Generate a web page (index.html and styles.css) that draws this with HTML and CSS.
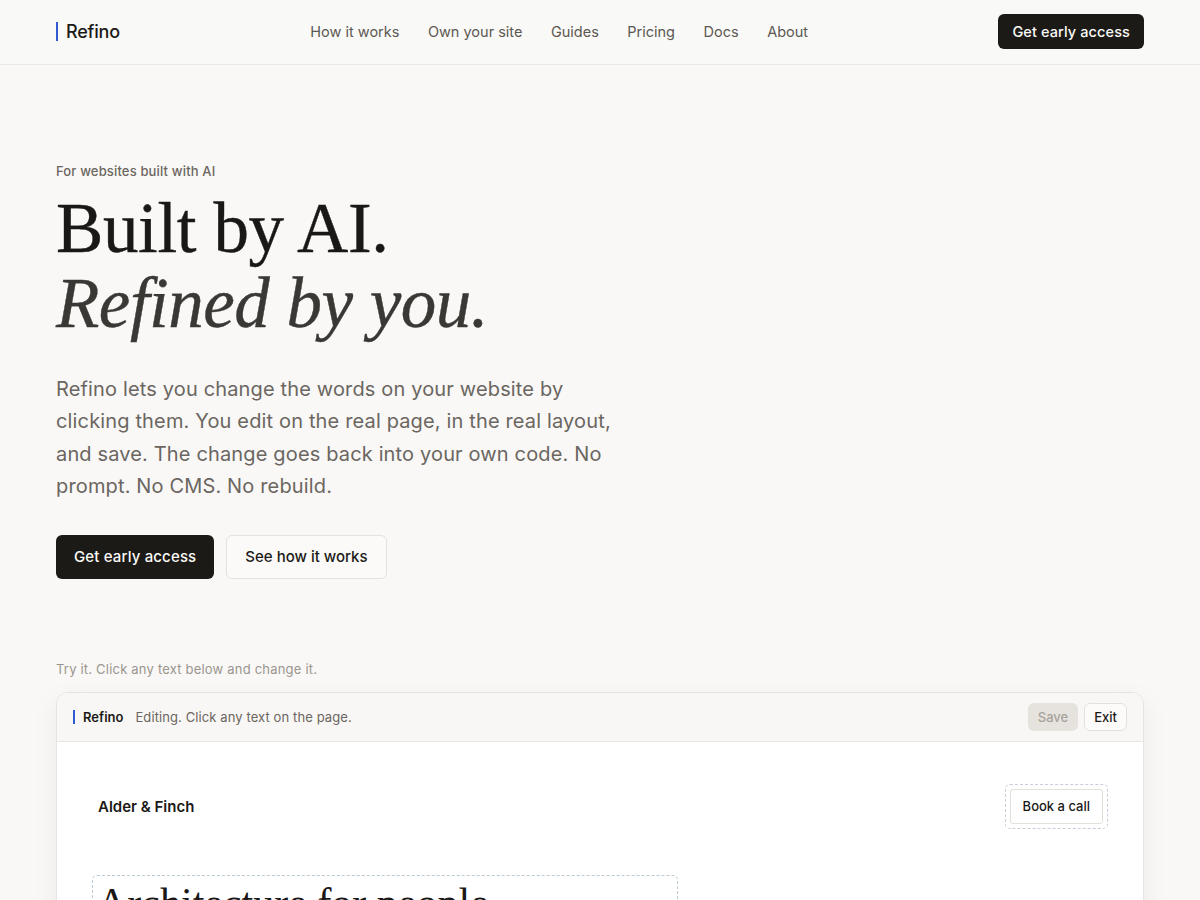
FILE: index.html
```html
<!DOCTYPE html>
<html lang="en">
<head>
<meta charset="utf-8">
<title>Refino — Built by AI. Refined by you.</title>
<link rel="stylesheet" href="styles.css">
</head>
<body>
<header class="topbar">
  <div class="wrap topbar-inner">
    <a class="logo" href="#"><span class="logo-bar"></span>Refino</a>
    <nav class="nav">
      <a href="#">How it works</a>
      <a href="#">Own your site</a>
      <a href="#">Guides</a>
      <a href="#">Pricing</a>
      <a href="#">Docs</a>
      <a href="#">About</a>
    </nav>
    <a class="btn btn-dark btn-sm" href="#">Get early access</a>
  </div>
</header>

<main class="wrap">
  <section class="hero">
    <p class="eyebrow">For websites built with AI</p>
    <h1 class="title">Built by AI.<br><em>Refined by you.</em></h1>
    <p class="lede">Refino lets you change the words on your website by clicking them. You edit on the real page, in the real layout, and save. The change goes back into your own code. No prompt. No CMS. No rebuild.</p>
    <div class="actions">
      <a class="btn btn-dark" href="#">Get early access</a>
      <a class="btn btn-light" href="#">See how it works</a>
    </div>
  </section>

  <section class="demo">
    <p class="demo-hint">Try it. Click any text below and change it.</p>
    <div class="card">
      <div class="toolbar">
        <span class="tb-logo"><span class="logo-bar small"></span>Refino</span>
        <span class="tb-status">Editing. Click any text on the page.</span>
        <span class="tb-spacer"></span>
        <button class="tb-btn tb-save">Save</button>
        <button class="tb-btn tb-exit">Exit</button>
      </div>
      <div class="site">
        <div class="site-head">
          <span class="site-brand">Alder &amp; Finch</span>
          <span class="editable-btn"><span class="site-cta">Book a call</span></span>
        </div>
        <h2 class="site-title editable">Architecture for people</h2>
      </div>
    </div>
  </section>
</main>
</body>
</html>
```

FILE: styles.css
```css
* { box-sizing: border-box; }
html, body { margin: 0; padding: 0; }
body {
  background: #f9f8f6;
  font-family: Inter, "Noto Sans", "Liberation Sans", sans-serif;
  color: #1c1a17;
  -webkit-font-smoothing: antialiased;
}
a { color: inherit; text-decoration: none; }

.wrap { width: 1088px; margin: 0 auto; }

.topbar {
  height: 65px;
  background: #f9f9f7;
  border-bottom: 1px solid #ebe9e4;
}
.topbar-inner {
  height: 63px;
  display: flex;
  align-items: center;
  justify-content: space-between;
}
.logo {
  display: flex;
  align-items: center;
  gap: 8px;
  font-size: 18px;
  font-weight: 500;
  color: #1c1a17;
  letter-spacing: -0.2px;
}
.logo-bar {
  display: inline-block;
  width: 2px;
  height: 19px;
  background: #2f5bd0;
}
.logo-bar.small { height: 14px; }
.nav { display: flex; gap: 28.5px; }
.nav a { font-size: 14.5px; color: #5c5852; }

.btn {
  display: inline-flex;
  align-items: center;
  justify-content: center;
  height: 44px;
  padding: 0 18px;
  border-radius: 6px;
  font-size: 15px;
  font-weight: 500;
  letter-spacing: 0.15px;
}
.btn-sm { height: 35px; padding: 0 14px; font-size: 14.5px; letter-spacing: 0.1px; }
.btn-dark { background: #1c1a17; color: #fbfaf8; }
.btn-light { background: #fbfaf8; color: #1c1a17; border: 1px solid #e5e2dc; letter-spacing: 0; }

.hero { padding-top: 98px; }
.eyebrow {
  margin: 0;
  font-size: 13px;
  font-weight: 500;
  color: #6b6660;
  line-height: 16px;
  letter-spacing: 0.15px;
}
.title {
  margin: 12px 0 0;
  font-family: "Liberation Serif", "DejaVu Serif", serif;
  font-weight: 400;
  font-size: 71px;
  line-height: 75px;
  letter-spacing: -0.4px;
  color: #1a1816;
  -webkit-text-stroke: 0.4px #1a1816;
}
.title em { color: #3a3835; letter-spacing: -0.5px; -webkit-text-stroke: 0.4px #3a3835; }
.lede {
  margin: 32px 0 0;
  width: 580px;
  font-size: 20px;
  line-height: 32.4px;
  letter-spacing: 0.15px;
  color: #6b6661;
}
.actions { display: flex; gap: 12px; margin-top: 32px; }

.demo { padding-top: 82px; padding-bottom: 40px; }
.demo-hint {
  margin: 0 0 15px;
  font-size: 13px;
  line-height: 16px;
  letter-spacing: 0.2px;
  color: #9a958f;
}
.card {
  background: #fff;
  border: 1px solid #e8e5e0;
  border-radius: 12px;
  overflow: hidden;
  box-shadow: 0 8px 28px rgba(40, 30, 20, 0.06);
}
.toolbar {
  height: 49px;
  display: flex;
  align-items: center;
  padding: 0 16px;
  background: #f8f7f5;
  border-bottom: 1px solid #ebe8e3;
}
.tb-logo {
  display: flex;
  align-items: center;
  gap: 8px;
  font-size: 13px;
  font-weight: 600;
  color: #1c1a17;
}
.tb-status { margin-left: 12px; font-size: 13px; letter-spacing: 0.1px; color: #6b6660; }
.tb-spacer { flex: 1; }
.tb-btn {
  font-family: inherit;
  height: 28px;
  padding: 0 10px;
  border-radius: 6px;
  font-size: 13px;
  font-weight: 500;
  cursor: pointer;
}
.tb-save { background: #e6e3de; color: #a8a39c; border: none; }
.tb-exit { margin-left: 6px; padding: 0 9px; background: #fcfbfa; color: #1c1a17; border: 1px solid #e3e0da; }

.site { padding: 42px 35px 40px 41px; }
.site-head {
  display: flex;
  align-items: center;
  justify-content: space-between;
}
.site-brand { font-size: 15px; font-weight: 600; color: #1c1a17; }
.editable-btn {
  padding: 4px;
  border: 1px dashed #cdcad9;
  border-radius: 5px;
}
.site-cta {
  display: inline-flex;
  align-items: center;
  height: 35px;
  padding: 0 12px;
  border: 1px solid #e3e0da;
  border-radius: 3px;
  font-size: 13px;
  font-weight: 500;
  color: #1c1a17;
  background: #fff;
}
.site-title {
  margin: 46px 0 0 -6px;
  width: 586px;
  padding: 0 4px;
  border: 1px dashed #bccbd3;
  border-radius: 5px;
  font-family: "Liberation Serif", "DejaVu Serif", serif;
  font-weight: 400;
  font-size: 42px;
  line-height: 54px;
  color: #1a1816;
}
```
